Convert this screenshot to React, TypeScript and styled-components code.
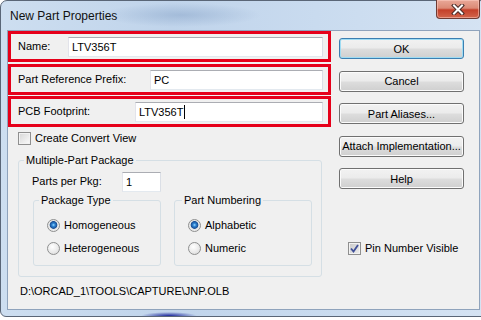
import styled, { createGlobalStyle } from "styled-components";

const GlobalStyle = createGlobalStyle`
  html, body {
    margin: 0;
    padding: 0;
  }
  body {
    width: 481px;
    height: 320px;
    overflow: hidden;
    background: #ffffff;
    font-family: "Liberation Sans", Arial, sans-serif;
    font-size: 11px;
    color: #000;
  }
`;

const Desktop = styled.div`
  width: 481px;
  height: 320px;
  overflow: hidden;
  background: #ffffff;
`;

const Window = styled.div`
  box-sizing: border-box;
  width: 487px;
  height: 317px;
  border: 1px solid #5a6677;
  border-radius: 7px 7px 6px 6px;
  padding: 0 6px 6px 6px;
  display: flex;
  flex-direction: column;
  background:
    radial-gradient(ellipse 28px 4px at 168px 100%, rgba(16, 26, 150, 0.95), rgba(16, 26, 150, 0) 100%),
    radial-gradient(ellipse 80px 12px at 180px 14px, rgba(120, 150, 190, 0.4), rgba(120, 150, 190, 0) 100%),
    linear-gradient(90deg, #cddef0 0%, #c0d4eb 35%, #c9dbef 65%, #d5e3f3 100%);
`;

const TitleBar = styled.div`
  height: 29px;
  display: flex;
  align-items: flex-start;
  justify-content: space-between;
`;

const Title = styled.span`
  font-size: 12px;
  margin: 8px 0 0 3px;
  color: #111;
`;

const CloseButton = styled.div`
  box-sizing: border-box;
  width: 44px;
  height: 19px;
  margin-top: -1px;
  border: 1px solid #6e3b34;
  border-top: none;
  border-radius: 0 0 4px 4px;
  display: flex;
  align-items: center;
  justify-content: center;
  background: linear-gradient(#e9a898 0%, #dc8a76 45%, #c4402a 55%, #d2654c 100%);
  box-shadow: inset 0 0 0 1px rgba(255, 210, 200, 0.5);
`;

const Client = styled.div`
  flex: 1;
  background: #f0f0f0;
  border: 1px solid #8fa3bc;
  display: flex;
  flex-direction: column;
`;

const Main = styled.div`
  display: flex;
  align-items: flex-start;
`;

const LeftCol = styled.div`
  width: 323px;
  display: flex;
  flex-direction: column;
`;

const RightCol = styled.div`
  width: 125px;
  margin: 7px 0 0 8px;
  display: flex;
  flex-direction: column;
  gap: 11.5px;
`;

const Highlight = styled.div<{ $gap: number }>`
  box-sizing: border-box;
  height: 31px;
  margin-top: ${(p) => p.$gap}px;
  border: 3px solid #e6001a;
  display: flex;
  align-items: center;
  padding: 0 5px 0 7px;
`;

const FieldLabel = styled.span<{ $w: number }>`
  width: ${(p) => p.$w}px;
  flex-shrink: 0;
  margin-top: -2px;
`;

const TextField = styled.div<{ $w?: number }>`
  box-sizing: border-box;
  height: 20px;
  ${(p) => (p.$w ? `width: ${p.$w}px;` : "flex: 1;")}
  background: #ffffff;
  border: 1px solid;
  border-color: #abadb3 #dbdfe6 #e3e9ef #e2e3ea;
  padding: 0 3px;
  display: flex;
  align-items: center;
  font-size: 11px;
`;

const Caret = styled.span`
  width: 1px;
  height: 14px;
  background: #000;
  margin-left: 1px;
`;

const CheckRow = styled.div<{ $mt: number; $ml: number }>`
  display: flex;
  align-items: center;
  gap: 4px;
  margin: ${(p) => p.$mt}px 0 0 ${(p) => p.$ml}px;
  line-height: 13px;
`;

const CheckBox = styled.span<{ $on?: boolean }>`
  box-sizing: border-box;
  width: 13px;
  height: 13px;
  border: 1px solid #8f8f8f;
  background: ${(p) =>
    p.$on
      ? "linear-gradient(135deg, #c9c9c9, #eeeeee)"
      : "linear-gradient(135deg, #d6d6d6, #fbfbfb)"};
  box-shadow: inset 0 0 0 1px #f2f2f2;
  display: flex;
  align-items: center;
  justify-content: center;
`;

const Group = styled.fieldset<{ $w: number }>`
  box-sizing: border-box;
  width: ${(p) => p.$w}px;
  min-inline-size: 0;
  margin: 0;
  padding: 0;
  border: 1px solid #d5dfe5;
  border-radius: 3px;
`;

const GroupLegend = styled.legend<{ $ml: number }>`
  padding: 0 2px;
  margin-left: ${(p) => p.$ml}px;
  line-height: 14px;
`;

const OuterGroup = styled(Group)`
  margin: 8px 0 0 10px;
`;

const GroupBody = styled.div`
  padding: 5px 0 10px 13px;
  display: flex;
  flex-direction: column;
`;

const PartsRow = styled.div`
  display: flex;
  align-items: center;
`;

const SubGroups = styled.div`
  display: flex;
  gap: 13px;
  margin: 1px 0 0 1px;
`;

const RadioList = styled.div`
  padding: 11px 0 10px 13px;
  display: flex;
  flex-direction: column;
  gap: 9px;
`;

const RadioRow = styled.div`
  display: flex;
  align-items: center;
  gap: 4px;
  line-height: 14px;
`;

const RadioDot = styled.span<{ $on?: boolean }>`
  box-sizing: border-box;
  width: 13px;
  height: 13px;
  border-radius: 50%;
  border: 1px solid #8e8f8f;
  background: ${(p) =>
    p.$on
      ? "radial-gradient(circle at 50% 45%, #9fdcff 0, #2f86d6 1.5px, #1a4f94 3.5px, #e6e6e6 4.2px, #f6f6f6 100%)"
      : "radial-gradient(circle at 40% 35%, #ffffff 0, #e8e8e8 60%, #d2d2d2 100%)"};
`;

const Button = styled.button<{ $default?: boolean }>`
  box-sizing: border-box;
  width: 125px;
  height: 21px;
  margin: 0;
  padding: 0;
  font-family: inherit;
  font-size: 11px;
  font-weight: normal;
  color: #000;
  border: 1px solid ${(p) => (p.$default ? "#3c7fb1" : "#707070")};
  border-radius: 3px;
  background: linear-gradient(#f2f2f2 0%, #ebebeb 48%, #dddddd 52%, #cfcfcf 100%);
  box-shadow: inset 0 0 0 1px ${(p) => (p.$default ? "#9fdcf3" : "#fbfbfb")};
`;

const PinRow = styled(CheckRow)``;

const PathText = styled.div`
  margin: 8px 0 0 12px;
  line-height: 13px;
`;

const CheckMark = () => (
  <svg width="9" height="9" viewBox="0 0 9 9">
    <path d="M1 4.5 L3.5 7.5 L8 1" fill="none" stroke="#3f4f98" strokeWidth="1.8" />
  </svg>
);

const CloseGlyph = () => (
  <svg width="14" height="11" viewBox="0 0 14 11">
    <path d="M3 1.5 L11 9.5 M11 1.5 L3 9.5" stroke="#4a2a26" strokeWidth="4" strokeLinecap="square" />
    <path d="M3 1.5 L11 9.5 M11 1.5 L3 9.5" stroke="#ffffff" strokeWidth="2" strokeLinecap="square" />
  </svg>
);

const App = () => (
  <Desktop>
    <GlobalStyle />
    <Window>
      <TitleBar>
        <Title>New Part Properties</Title>
        <CloseButton>
          <CloseGlyph />
        </CloseButton>
      </TitleBar>
      <Client>
        <Main>
          <LeftCol>
            <Highlight $gap={0}>
              <FieldLabel $w={50}>Name:</FieldLabel>
              <TextField>LTV356T</TextField>
            </Highlight>
            <Highlight $gap={2}>
              <FieldLabel $w={132}>Part Reference Prefix:</FieldLabel>
              <TextField>PC</TextField>
            </Highlight>
            <Highlight $gap={1}>
              <FieldLabel $w={117}>PCB Footprint:</FieldLabel>
              <TextField>
                LTV356T
                <Caret />
              </TextField>
            </Highlight>
            <CheckRow $mt={5} $ml={10}>
              <CheckBox />
              Create Convert View
            </CheckRow>
            <OuterGroup $w={304}>
              <GroupLegend $ml={5}>Multiple-Part Package</GroupLegend>
              <GroupBody>
                <PartsRow>
                  <FieldLabel $w={90}>Parts per Pkg:</FieldLabel>
                  <TextField $w={39}>1</TextField>
                </PartsRow>
                <SubGroups>
                  <Group $w={128}>
                    <GroupLegend $ml={5}>Package Type</GroupLegend>
                    <RadioList>
                      <RadioRow>
                        <RadioDot $on />
                        Homogeneous
                      </RadioRow>
                      <RadioRow>
                        <RadioDot />
                        Heterogeneous
                      </RadioRow>
                    </RadioList>
                  </Group>
                  <Group $w={138}>
                    <GroupLegend $ml={7}>Part Numbering</GroupLegend>
                    <RadioList>
                      <RadioRow>
                        <RadioDot $on />
                        Alphabetic
                      </RadioRow>
                      <RadioRow>
                        <RadioDot />
                        Numeric
                      </RadioRow>
                    </RadioList>
                  </Group>
                </SubGroups>
              </GroupBody>
            </OuterGroup>
          </LeftCol>
          <RightCol>
            <Button $default>OK</Button>
            <Button>Cancel</Button>
            <Button>Part Aliases...</Button>
            <Button>Attach Implementation...</Button>
            <Button>Help</Button>
            <PinRow $mt={41} $ml={9}>
              <CheckBox $on>
                <CheckMark />
              </CheckBox>
              Pin Number Visible
            </PinRow>
          </RightCol>
        </Main>
        <PathText>D:\ORCAD_1\TOOLS\CAPTURE\JNP.OLB</PathText>
      </Client>
    </Window>
  </Desktop>
);

export default App;
